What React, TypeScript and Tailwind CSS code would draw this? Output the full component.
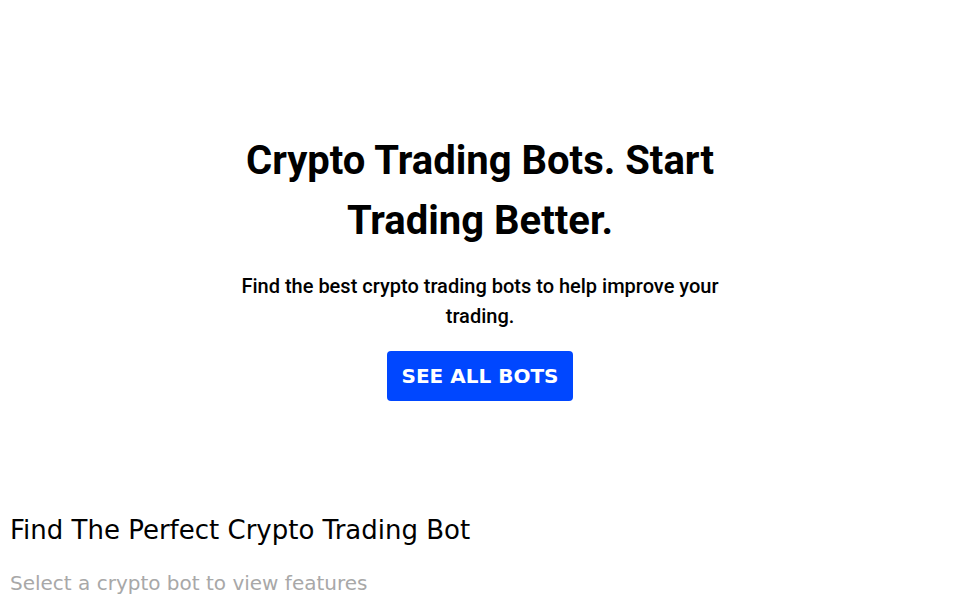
import React from "react";

// Hero + bot finder heading
const Hero: React.FC = () => {
  return (
    <section className="flex flex-col items-center pt-[131px] text-center">
      <h1 className="w-[480px] text-[40px] leading-[60px] font-bold text-black font-['Roboto',sans-serif]">
        Crypto Trading Bots. Start Trading Better.
      </h1>
      <p className="mt-[20px] w-[490px] text-[20px] leading-[30px] font-medium text-black font-['Roboto',sans-serif]">
        Find the best crypto trading bots to help improve your trading.
      </p>
      <button className="mt-[20px] h-[50px] px-[15px] rounded-[4px] bg-[#0047ff] text-white text-[20px] font-bold font-['DejaVu_Sans',sans-serif]">
        SEE ALL BOTS
      </button>
    </section>
  );
};

export default function App() {
  return (
    <div className="min-h-screen bg-white">
      <Hero />
      <section className="px-[10px] pt-[114px] font-['DejaVu_Sans',sans-serif]">
        <h2 className="text-[26px] leading-[30px] text-black">Find The Perfect Crypto Trading Bot</h2>
        <p className="mt-[26px] text-[20px] leading-[24px] text-[#a8a8a8]">Select a crypto bot to view features</p>
      </section>
    </div>
  );
}
